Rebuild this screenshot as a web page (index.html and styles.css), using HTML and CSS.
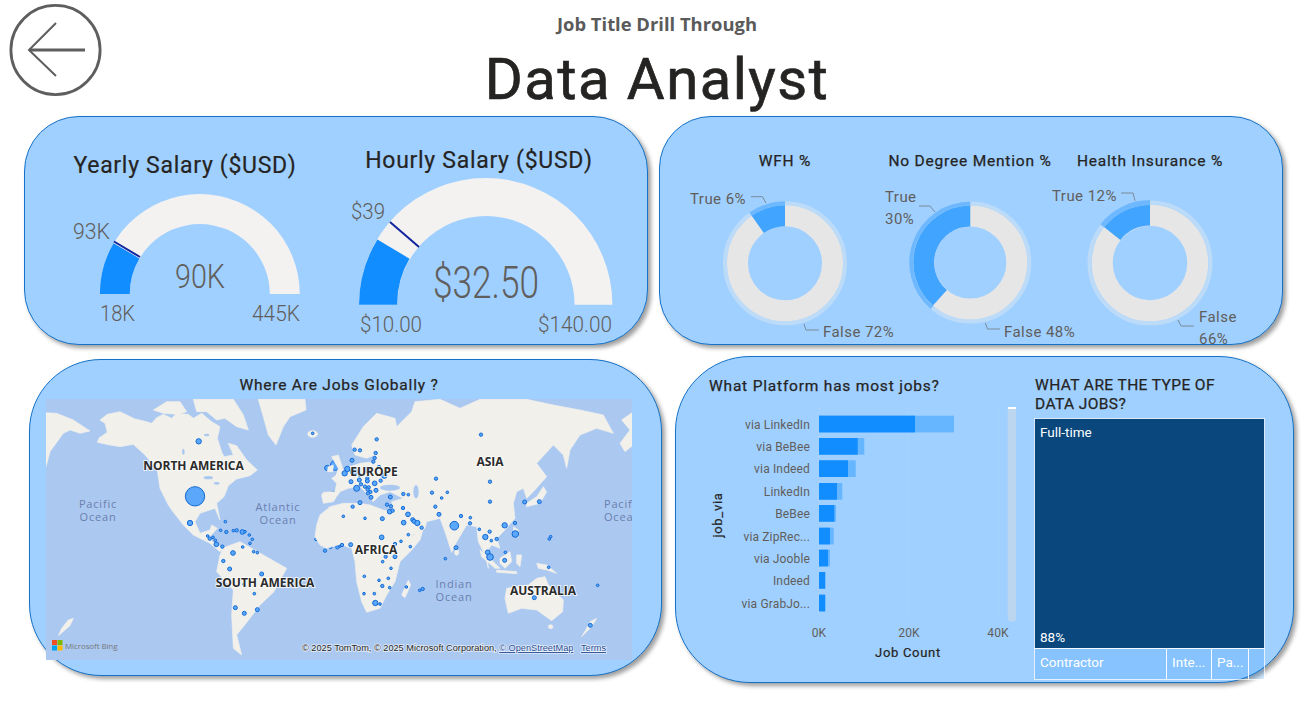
FILE: index.html
```html
<!DOCTYPE html>
<html lang="en">
<head>
<meta charset="utf-8">
<title>Job Title Drill Through</title>
<link rel="stylesheet" href="styles.css">
</head>
<body>
<header class="top">
  <svg class="back" viewBox="0 0 92 92" width="92" height="92" aria-label="Back">
    <circle cx="45.5" cy="46" r="44.6" class="back-ring"/>
    <path d="M19 46H75" class="back-shaft"/>
    <path d="M46 19L19 46L46 72" class="back-head"/>
  </svg>
  <div class="heading">
    <div class="kicker">Job Title Drill Through</div>
    <h1 class="title">Data Analyst</h1>
  </div>
</header>

<section class="row row-a">
  <div class="panel panel-salary">
    <div class="gauge gauge-year">
      <h2 class="gauge-title">Yearly Salary ($USD)</h2>
      <svg viewBox="60 176 250 165" width="250" height="165">
        <path class="g-bg" d="M99.8 294A100 100 0 0 1 299.8 294H269.8A70 70 0 0 0 129.8 294Z"/>
        <path class="g-fill" d="M99.8 294A100 100 0 0 1 113.6 243.2L139.4 258.4A70 70 0 0 0 129.8 294Z"/>
        <path class="g-target" d="M114 241.500L140 257"/>
        <text class="g-val" x="175" y="288" font-size="33" textLength="50" lengthAdjust="spacingAndGlyphs">90K</text>
        <text class="g-lab" x="73" y="239" textLength="37" lengthAdjust="spacingAndGlyphs">93K</text>
        <text class="g-lab" x="100" y="321" textLength="35" lengthAdjust="spacingAndGlyphs">18K</text>
        <text class="g-lab" x="252" y="321" textLength="48" lengthAdjust="spacingAndGlyphs">445K</text>
      </svg>
    </div>
    <div class="gauge gauge-hour">
      <h2 class="gauge-title">Hourly Salary ($USD)</h2>
      <svg viewBox="340 171 278 170" width="278" height="170">
        <path class="g-bg" d="M359 304.700A126.700 126.700 0 0 1 612.400 304.700H574.600A88.700 88.700 0 0 0 397.200 304.700Z"/>
        <path class="g-fill" d="M359 304.700A126.700 126.700 0 0 1 377.400 239.400L409.500 258.700A88.700 88.700 0 0 0 397.200 304.700Z"/>
        <path class="g-target" d="M390 222L419 247"/>
        <text class="g-val" x="433" y="298" font-size="44" textLength="106" lengthAdjust="spacingAndGlyphs">$32.50</text>
        <text class="g-lab" x="351" y="219" textLength="34" lengthAdjust="spacingAndGlyphs">$39</text>
        <text class="g-lab" x="360" y="332" textLength="62" lengthAdjust="spacingAndGlyphs">$10.00</text>
        <text class="g-lab" x="538" y="332" textLength="74" lengthAdjust="spacingAndGlyphs">$140.00</text>
      </svg>
    </div>
  </div>

  <div class="panel panel-donuts">
    <div class="donut donut-a">
      <h3 class="chart-title">WFH %</h3>
      <svg viewBox="685 171 200 174" width="200" height="174">
        <circle class="d-halo" cx="785" cy="263.300" r="60"/>
        <circle class="d-main" cx="785" cy="263.300" r="47.500"/>
        <path class="d-true-halo" d="M785 201.300A62 62 0 0 0 749.400 212.500L751.700 216A58 58 0 0 1 785 205.300Z"/>
        <path class="d-true" d="M785 205.300A58 58 0 0 0 751.700 215.800L763.800 233A37 37 0 0 1 785 226.300Z"/>
        <path class="d-lead" d="M751 196.700H762.500L766 203M804 324L806 330H819"/>
        <text class="d-lab" x="690" y="204">True 6%</text>
        <text class="d-lab" x="823" y="337">False 72%</text>
      </svg>
    </div>
    <div class="donut donut-b">
      <h3 class="chart-title">No Degree Mention %</h3>
      <svg viewBox="885 171 170 174" width="170" height="174">
        <circle class="d-halo" cx="970.300" cy="262.500" r="59"/>
        <circle class="d-main" cx="970.300" cy="262.500" r="46.500"/>
        <path class="d-true-halo" d="M970.300 201.500A61 61 0 0 0 930.700 309L933.300 306A57 57 0 0 1 970.300 205.500Z"/>
        <path class="d-true" d="M970.300 205.500A57 57 0 0 0 933 305.600L946.900 290A36 36 0 0 1 970.300 226.500Z"/>
        <path class="d-lead" d="M919 206H930L935 212M985.400 323L987.500 329H1000"/>
        <text class="d-lab" x="885" y="202">True</text>
        <text class="d-lab" x="885" y="224">30%</text>
        <text class="d-lab" x="1004" y="337">False 48%</text>
      </svg>
    </div>
    <div class="donut donut-c">
      <h3 class="chart-title">Health Insurance %</h3>
      <svg viewBox="1055 171 190 174" width="190" height="174">
        <circle class="d-halo" cx="1150" cy="263" r="60.500"/>
        <circle class="d-main" cx="1150" cy="263" r="47.750"/>
        <path class="d-true-halo" d="M1150 200A63 63 0 0 0 1100.400 224.200L1104.300 227.300A58 58 0 0 1 1150 205Z"/>
        <path class="d-true" d="M1150 205A58 58 0 0 0 1104.300 227.300L1120.400 240A37.500 37.500 0 0 1 1150 225.500Z"/>
        <path class="d-lead" d="M1121 193H1133L1135 200.700M1178 320L1181 326H1194"/>
        <text class="d-lab" x="1052" y="201">True 12%</text>
        <text class="d-lab" x="1199" y="322">False</text>
        <text class="d-lab" x="1199" y="344">66%</text>
      </svg>
    </div>
  </div>
</section>

<section class="row row-b">
  <div class="panel panel-map">
    <h3 class="chart-title map-title">Where Are Jobs Globally ?</h3>
    <svg class="map" viewBox="46 399 586 261" width="586" height="261">
      <rect class="ocean" x="46" y="399" width="586" height="261"/>
      <g transform="translate(20 355) scale(.33333)">
        <g class="land">
          <path d="M232 262L238 248L262 232L255 205L240 195L262 178L300 170L345 192L372 198L395 205L410 188L430 178L455 190L470 175L505 178L520 190L545 175L575 200L600 215L592 250L605 290L612 305L640 300L625 265L650 272L680 315L712 345L690 362L650 372L625 392L612 425L590 445L600 495L585 460L540 475L525 500L540 535L570 525L575 510L592 520L565 550L590 570L612 578L600 590L570 565L520 540L490 510L455 465L445 450L420 400L412 345L375 300L340 268L300 275L270 270Z"/>
          <path d="M400 165L440 140L480 140L500 170L470 178L430 175Z"/>
          <path d="M520 133L640 133L670 180L685 225L650 215L615 190L590 195L560 170L530 170Z"/>
          <path d="M715 133L855 133L858 165L810 185L790 215L768 270L745 240L730 185Z"/>
          <ellipse cx="878" cy="237" rx="15" ry="10"/>
          <path d="M60 172L110 175L160 195L210 228L180 235L150 225L130 235L90 290L78 335L60 340Z"/>
          <path d="M160 790L150 812L115 842L125 820L145 795Z"/>
          <path d="M610 578L660 560L730 600L800 640L762 710L720 750L682 800L650 840L665 900L640 880L635 780L640 705L590 650L600 600Z"/>
        </g>
        <g class="ocean">
          <ellipse cx="565" cy="368" rx="14" ry="5"/>
          <ellipse cx="590" cy="385" rx="9" ry="4"/>
          <ellipse cx="520" cy="330" rx="4" ry="10"/>
          <ellipse cx="490" cy="290" rx="4" ry="9"/>
          <ellipse cx="560" cy="240" rx="8" ry="4"/>
        </g>
        <g class="dots">
          <circle cx="536" cy="259" r="8"/><circle cx="525" cy="424" r="29"/><circle cx="510" cy="504" r="8"/><circle cx="878" cy="235" r="4"/>
          <circle cx="922" cy="339" r="8"/><circle cx="946" cy="331" r="15"/><circle cx="967" cy="380" r="14"/><circle cx="921" cy="423" r="8"/>
          <circle cx="941" cy="419" r="10"/><circle cx="925" cy="468" r="6"/><circle cx="970" cy="484" r="4"/><circle cx="616" cy="500" r="4"/>
          <circle cx="602" cy="526" r="4"/><circle cx="619" cy="531" r="5"/><circle cx="640" cy="527" r="4"/><circle cx="650" cy="526" r="5"/>
          <circle cx="667" cy="531" r="7"/><circle cx="675" cy="530" r="4"/><circle cx="688" cy="540" r="4"/><circle cx="697" cy="553" r="4"/>
          <circle cx="690" cy="565" r="4"/><circle cx="668" cy="576" r="4"/><circle cx="701" cy="590" r="4"/><circle cx="712" cy="593" r="4"/>
          <circle cx="563" cy="543" r="4"/><circle cx="569" cy="551" r="5"/><circle cx="579" cy="547" r="4"/><circle cx="586" cy="556" r="4"/>
          <circle cx="589" cy="568" r="7"/><circle cx="607" cy="575" r="5"/><circle cx="639" cy="594" r="7"/><circle cx="610" cy="618" r="5"/>
          <circle cx="629" cy="642" r="6"/><circle cx="725" cy="657" r="6"/><circle cx="672" cy="688" r="4"/><circle cx="703" cy="716" r="4"/>
          <circle cx="646" cy="758" r="6"/><circle cx="673" cy="775" r="6"/><circle cx="712" cy="764" r="6"/><circle cx="893" cy="547" r="4"/>
          <circle cx="888" cy="553" r="4"/><circle cx="910" cy="565" r="4"/><circle cx="932" cy="577" r="4"/><circle cx="915" cy="587" r="5"/>
          <circle cx="946" cy="539" r="4"/><circle cx="949" cy="559" r="4"/><circle cx="952" cy="577" r="5"/><circle cx="960" cy="573" r="4"/><circle cx="966" cy="570" r="4"/>
        </g>
      </g>
      <g transform="translate(340 355) scale(.33333)">
        <g class="land">
          <path d="M-60 480L-30 455L10 445L60 445L90 450L130 465L165 470L190 500L215 545L250 520L240 555L215 585L180 620L165 680L140 720L120 760L80 772L65 740L50 680L45 620L35 580L0 568L-40 580L-60 570L-75 545L-70 510Z"/>
          <path d="M-55 420L-50 412L-15 410L-10 385L-25 370L5 350L30 335L60 325L100 320L105 300L80 310L45 300L35 270L70 215L110 175L165 190L170 215L215 170L225 140L300 133L360 160L420 133L560 133L640 150L720 165L790 180L820 235L770 220L720 240L690 285L680 340L670 300L640 270L590 325L620 365L580 410L560 430L550 400L530 410L520 445L525 490L490 530L470 550L480 580L455 570L440 590L445 640L435 600L415 560L410 515L380 510L350 560L335 592L315 530L300 490L260 500L255 520L210 545L190 500L160 470L155 440L190 430L150 410L120 420L100 440L85 420L60 395L25 400L0 410L-20 440L-50 445Z"/>
          <path d="M-25 305L-5 300L10 345L15 365L-15 372L-5 340Z"/>
          <path d="M-35 335L-20 330L-22 350L-38 350Z"/>
          <path d="M560 445L590 425L610 395L620 410L600 445L560 455Z"/>
          <path d="M520 515L535 525L535 548L522 535Z"/>
          <path d="M420 585L450 610L480 640L465 640L425 605Z"/>
          <path d="M470 645L530 650L530 656L470 652Z"/>
          <path d="M480 610L510 590L515 620L495 640L480 625Z"/>
          <path d="M530 600L545 600L540 635L530 625Z"/>
          <path d="M590 625L620 630L650 655L620 645L595 640Z"/>
          <ellipse cx="350" cy="592" rx="6" ry="9"/>
          <path d="M205 675L212 690L195 728L185 720Z"/>
          <path d="M500 700L530 695L565 690L590 670L615 665L625 690L670 735L668 770L635 797L590 765L545 760L505 775L495 730Z"/>
          <ellipse cx="632" cy="815" rx="7" ry="6"/>
          <path d="M770 790L755 815L725 845L740 820L750 800Z"/>
          <path d="M880 170L845 195L870 225L840 265L855 290L880 270Z"/>
        </g>
        <ellipse class="ocean" cx="150" cy="398" rx="30" ry="9"/>
        <ellipse class="ocean" cx="228" cy="410" rx="8" ry="20"/>
        <g class="dots">
          <circle cx="110" cy="253" r="5"/><circle cx="423" cy="239" r="5"/><circle cx="44" cy="284" r="5"/><circle cx="60" cy="286" r="5"/>
          <circle cx="107" cy="294" r="5"/><circle cx="104" cy="309" r="5"/><circle cx="100" cy="320" r="5"/><circle cx="36" cy="316" r="6"/>
          <circle cx="117" cy="336" r="5"/><circle cx="22" cy="342" r="8"/><circle cx="42" cy="350" r="11"/><circle cx="14" cy="355" r="8"/>
          <circle cx="80" cy="344" r="8"/><circle cx="60" cy="360" r="5"/><circle cx="33" cy="380" r="6"/><circle cx="58" cy="375" r="6"/>
          <circle cx="82" cy="370" r="5"/><circle cx="82" cy="378" r="6"/><circle cx="133" cy="362" r="8"/><circle cx="104" cy="385" r="7"/>
          <circle cx="122" cy="377" r="5"/><circle cx="63" cy="388" r="5"/><circle cx="75" cy="395" r="5"/><circle cx="86" cy="397" r="5"/>
          <circle cx="50" cy="400" r="9"/><circle cx="83" cy="404" r="5"/><circle cx="108" cy="406" r="6"/><circle cx="91" cy="411" r="5"/>
          <circle cx="84" cy="415" r="5"/><circle cx="93" cy="427" r="6"/><circle cx="151" cy="426" r="6"/><circle cx="60" cy="443" r="6"/>
          <circle cx="38" cy="455" r="5"/><circle cx="141" cy="449" r="5"/><circle cx="153" cy="454" r="5"/><circle cx="149" cy="470" r="7"/>
          <circle cx="158" cy="467" r="5"/><circle cx="10" cy="484" r="4"/><circle cx="75" cy="490" r="4"/><circle cx="127" cy="491" r="6"/>
          <circle cx="190" cy="417" r="5"/><circle cx="205" cy="419" r="4"/><circle cx="288" cy="371" r="5"/><circle cx="276" cy="413" r="5"/>
          <circle cx="322" cy="412" r="4"/><circle cx="305" cy="429" r="4"/><circle cx="286" cy="455" r="5"/><circle cx="189" cy="459" r="5"/>
          <circle cx="297" cy="478" r="6"/><circle cx="204" cy="478" r="7"/><circle cx="218" cy="494" r="6"/><circle cx="222" cy="499" r="6"/>
          <circle cx="232" cy="504" r="8"/><circle cx="245" cy="518" r="5"/><circle cx="191" cy="503" r="7"/><circle cx="205" cy="539" r="4"/>
          <circle cx="125" cy="547" r="7"/><circle cx="183" cy="559" r="4"/><circle cx="165" cy="567" r="5"/><circle cx="211" cy="575" r="4"/>
          <circle cx="6" cy="570" r="5"/><circle cx="32" cy="569" r="6"/><circle cx="137" cy="605" r="5"/><circle cx="165" cy="605" r="6"/>
          <circle cx="128" cy="620" r="4"/><circle cx="153" cy="640" r="4"/><circle cx="73" cy="664" r="4"/><circle cx="117" cy="676" r="4"/>
          <circle cx="145" cy="670" r="4"/><circle cx="127" cy="693" r="5"/><circle cx="149" cy="698" r="4"/><circle cx="199" cy="696" r="4"/>
          <circle cx="72" cy="716" r="4"/><circle cx="103" cy="716" r="4"/><circle cx="106" cy="744" r="8"/><circle cx="120" cy="747" r="4"/>
          <circle cx="239" cy="706" r="4"/><circle cx="248" cy="702" r="5"/><circle cx="316" cy="611" r="4"/><circle cx="348" cy="578" r="6"/>
          <circle cx="343" cy="512" r="13"/><circle cx="363" cy="483" r="5"/><circle cx="391" cy="488" r="4"/><circle cx="390" cy="505" r="5"/>
          <circle cx="418" cy="523" r="4"/><circle cx="449" cy="530" r="5"/><circle cx="436" cy="546" r="8"/><circle cx="454" cy="557" r="4"/>
          <circle cx="470" cy="552" r="5"/><circle cx="494" cy="511" r="8"/><circle cx="525" cy="504" r="5"/><circle cx="526" cy="537" r="10"/>
          <circle cx="554" cy="441" r="6"/><circle cx="598" cy="440" r="6"/><circle cx="450" cy="380" r="5"/><circle cx="450" cy="440" r="5"/>
          <circle cx="632" cy="545" r="4"/><circle cx="628" cy="552" r="4"/><circle cx="443" cy="592" r="7"/><circle cx="450" cy="606" r="10"/>
          <circle cx="496" cy="592" r="4"/><circle cx="494" cy="616" r="6"/><circle cx="626" cy="637" r="4"/><circle cx="583" cy="728" r="6"/>
          <circle cx="773" cy="691" r="4"/><circle cx="751" cy="811" r="6"/>
        </g>
      </g>
      <text class="m-cont" x="193.500" y="470" text-anchor="middle">NORTH AMERICA</text>
      <text class="m-cont" x="265" y="587" text-anchor="middle">SOUTH AMERICA</text>
      <text class="m-cont" x="374" y="476" text-anchor="middle">EUROPE</text>
      <text class="m-cont" x="376" y="554" text-anchor="middle">AFRICA</text>
      <text class="m-cont" x="490" y="466" text-anchor="middle">ASIA</text>
      <text class="m-cont" x="543" y="595" text-anchor="middle">AUSTRALIA</text>
      <text class="m-sea" x="98" y="508" text-anchor="middle">Pacific</text>
      <text class="m-sea" x="98" y="521" text-anchor="middle">Ocean</text>
      <text class="m-sea" x="278" y="511" text-anchor="middle">Atlantic</text>
      <text class="m-sea" x="278" y="524" text-anchor="middle">Ocean</text>
      <text class="m-sea" x="454" y="588" text-anchor="middle">Indian</text>
      <text class="m-sea" x="454" y="601" text-anchor="middle">Ocean</text>
      <text class="m-sea" x="604" y="508">Pacific</text>
      <text class="m-sea" x="604" y="521">Ocean</text>
      <rect x="52" y="640" width="5" height="5" fill="#f25022"/>
      <rect x="57.500" y="640" width="5" height="5" fill="#7fba00"/>
      <rect x="52" y="645.500" width="5" height="5" fill="#00a4ef"/>
      <rect x="57.500" y="645.500" width="5" height="5" fill="#ffb900"/>
      <text class="m-bing" x="65" y="649">Microsoft Bing</text>
      <text class="m-attr" x="302" y="651">© 2025 TomTom, © 2025 Microsoft Corporation, <tspan class="m-link">© OpenStreetMap</tspan></text>
      <text class="m-attr m-link" x="581" y="651">Terms</text>
    </svg>
  </div>

  <div class="panel panel-jobs">
    <div class="platform">
      <h3 class="chart-title platform-title">What Platform has most jobs?</h3>
      <svg viewBox="709 398 310 268" width="310" height="268">
        <path class="grid" d="M819 408V618M908.700 408V618M998.300 408V618"/>
        <rect class="scroll" x="1007.700" y="406.700" width="8.300" height="215" rx="4"/>
        <rect class="scroll-cap" x="1008" y="407" width="8" height="2"/>
        <g class="bar-light">
          <rect x="819" y="415.700" width="135" height="16.700"/><rect x="819" y="438" width="45.300" height="16.700"/>
          <rect x="819" y="460.300" width="36.700" height="16.700"/><rect x="819" y="483" width="23.300" height="16.700"/>
          <rect x="819" y="505" width="17" height="16.700"/><rect x="819" y="527.700" width="14.700" height="16.700"/>
          <rect x="819" y="549.700" width="11" height="16.700"/><rect x="819" y="572" width="6.700" height="16.700"/>
          <rect x="819" y="594.700" width="6.700" height="16.700"/>
        </g>
        <g class="bar-dark">
          <rect x="819" y="415.700" width="96" height="16.700"/><rect x="819" y="438" width="38.700" height="16.700"/>
          <rect x="819" y="460.300" width="29" height="16.700"/><rect x="819" y="483" width="18" height="16.700"/>
          <rect x="819" y="505" width="15.300" height="16.700"/><rect x="819" y="527.700" width="11" height="16.700"/>
          <rect x="819" y="549.700" width="9" height="16.700"/><rect x="819" y="572" width="6" height="16.700"/>
          <rect x="819" y="594.700" width="6" height="16.700"/>
        </g>
        <g class="cat" text-anchor="end">
          <text x="810" y="429">via LinkedIn</text><text x="810" y="451">via BeBee</text>
          <text x="810" y="473">via Indeed</text><text x="810" y="496">LinkedIn</text>
          <text x="810" y="518">BeBee</text><text x="810" y="541">via ZipRec...</text>
          <text x="810" y="563">via Jooble</text><text x="810" y="585">Indeed</text>
          <text x="810" y="608">via GrabJo...</text>
        </g>
        <g class="cat" text-anchor="middle">
          <text x="819" y="637">0K</text><text x="909" y="637">20K</text><text x="998" y="637">40K</text>
        </g>
        <text class="axis" x="908" y="657" text-anchor="middle">Job Count</text>
        <text class="axis" transform="translate(722 515) rotate(-90)" text-anchor="middle">job_via</text>
      </svg>
    </div>
    <div class="types">
      <h3 class="chart-title types-title">WHAT ARE THE TYPE OF DATA JOBS?</h3>
      <div class="treemap">
        <div class="tm-main"><span>Full-time</span><span>88%</span></div>
        <div class="tm-row">
          <div class="tm-cell tm-c1">Contractor</div>
          <div class="tm-cell tm-c2">Inte...</div>
          <div class="tm-cell tm-c3">Pa...</div>
          <div class="tm-cell tm-c4"></div>
        </div>
      </div>
    </div>
  </div>
</section>
</body>
</html>
```
FILE: styles.css
```css
* { box-sizing: border-box; }
html, body { margin: 0; padding: 0; background: #fff; }
body { width: 1304px; height: 718px; overflow: hidden; font-family: "Roboto", "Liberation Sans", sans-serif; color: #252423; }
h1, h2, h3 { margin: 0; font-weight: 500; }
svg { display: block; overflow: visible; }
svg.map { overflow: hidden; }

.top { display: grid; grid-template-columns: 92px 1fr 92px; padding: 4px 0 0 10px; height: 116px; }
.back-ring { fill: none; stroke: #5e5e5e; stroke-width: 2.8; }
.back-shaft { fill: none; stroke: #5e5e5e; stroke-width: 3; }
.back-head { fill: none; stroke: #5e5e5e; stroke-width: 2; }
.heading { display: flex; flex-direction: column; align-items: center; }
.kicker { margin-top: 9px; font: 700 18.400px/22px "Open Sans", sans-serif; color: #5a5a5a; }
.title { margin-top: 11px; font: 400 58px/66px "Roboto", sans-serif; letter-spacing: 1.500px; color: #252423; -webkit-text-stroke: .7px #252423; }

.row { display: flex; align-items: flex-start; }
.row-a { padding-left: 24px; gap: 11px; }
.row-b { padding-left: 29px; gap: 13px; }
.panel { background: #a0d0ff; border: 1px solid #1572c8; box-shadow: 3px 3px 4px rgba(0, 0, 0, .38); flex: none; }

.panel-salary { width: 624px; height: 229px; border-radius: 55px; display: flex; padding-left: 35px; gap: 30px; }
.gauge-title { height: 22px; font: 400 23px/24px "Roboto", sans-serif; letter-spacing: .7px; text-align: center; white-space: nowrap; color: #252423; -webkit-text-stroke: .2px #252423; }
.gauge-year .gauge-title { margin-top: 37px; }
.gauge-hour .gauge-title { margin-top: 32px; }
.g-bg { fill: #f3f2f1; }
.g-fill { fill: #118dff; }
.g-target { stroke: #12239e; stroke-width: 2; fill: none; }
.g-val { font-weight: 300; fill: #605e5c; }
.g-lab { font-size: 22px; font-weight: 300; fill: #605e5c; }

.panel-donuts { width: 624px; height: 229px; border-radius: 52px; display: flex; padding: 34px 0 0 25px; }
.chart-title { font: 400 15.500px/20px "Roboto", sans-serif; letter-spacing: .8px; color: #252423; text-align: center; white-space: nowrap; -webkit-text-stroke: .25px #252423; }
.d-halo { fill: none; stroke: #bcdbf8; stroke-width: 4; }
.d-main { fill: none; stroke: #e6e6e6; stroke-width: 21; }
.d-true { fill: #41a4ff; }
.d-true-halo { fill: #6db8ff; }
.d-lead { fill: none; stroke: #7a8a9a; stroke-width: 1; }
.d-lab { font-size: 15px; letter-spacing: .45px; fill: #605e5c; }

.panel-map { width: 633px; height: 317px; margin-top: 14px; border-radius: 72px; padding: 15px 0 0 16px; display: flex; flex-direction: column; }
.map-title { height: 24px; width: 586px; }
.ocean { fill: #abc8f1; }
.land { fill: #f1f0ea; stroke: #f1f0ea; stroke-width: 2; stroke-linejoin: round; filter: blur(.5px); }
.dots circle { fill: #5aa7fb; stroke: #1269d3; stroke-width: 3; }
.m-cont { font: 700 12px "Open Sans", sans-serif; fill: #2b2b2b; stroke: rgba(255, 255, 255, .75); stroke-width: 2px; paint-order: stroke; }
.m-sea { font: 400 11px "Open Sans", sans-serif; letter-spacing: .8px; fill: #6a7fae; }
.m-bing { font: 400 8px "Open Sans", sans-serif; letter-spacing: -.1px; fill: #77797e; }
.m-attr { font: 400 9.200px "Liberation Sans", sans-serif; fill: #1d1d1d; stroke: rgba(255, 255, 255, .7); stroke-width: 1.500px; paint-order: stroke; }
.m-link { fill: #2b4f94; text-decoration: underline; }

.panel-jobs { width: 619px; height: 327px; margin-top: 11px; border-radius: 75px; padding: 19px 0 0 33px; display: flex; }
.platform { width: 326px; flex: none; }
.platform-title { text-align: left; height: 22px; }
.grid { stroke: #bcd8f4; stroke-width: 1; stroke-dasharray: 1 3; fill: none; }
.scroll { fill: #bcd6f0; }
.scroll-cap { fill: #fff; }
.bar-light { fill: #66b5ff; }
.bar-dark { fill: #118dff; }
.cat text { font-size: 12px; fill: #605e5c; letter-spacing: .15px; }
.axis { font: 400 13px "Roboto", sans-serif; letter-spacing: .7px; fill: #252423; stroke: #252423; stroke-width: .2px; }

.types { width: 229px; flex: none; }
.types-title { width: 205px; text-align: left; white-space: normal; line-height: 19px; height: 43px; font-size: 15.500px; letter-spacing: .4px; }
.treemap { display: flex; flex-direction: column; gap: 1px; height: 260px; }
.tm-main { height: 229px; background: #09477d; color: #fff; font-size: 13.500px; display: flex; flex-direction: column; justify-content: space-between; padding: 5px 5px 3px; outline: 1px solid #dbe9f7; }
.tm-row { display: flex; gap: 1px; height: 30px; }
.tm-cell { background: rgba(17, 136, 255, .18); color: #fff; font-size: 13.500px; line-height: 27px; padding-left: 5px; outline: 1px solid rgba(255, 255, 255, .7); }
.tm-c1 { width: 131px; }
.tm-c2 { width: 44px; }
.tm-c3 { width: 36px; }
.tm-c4 { width: 15px; }
```
